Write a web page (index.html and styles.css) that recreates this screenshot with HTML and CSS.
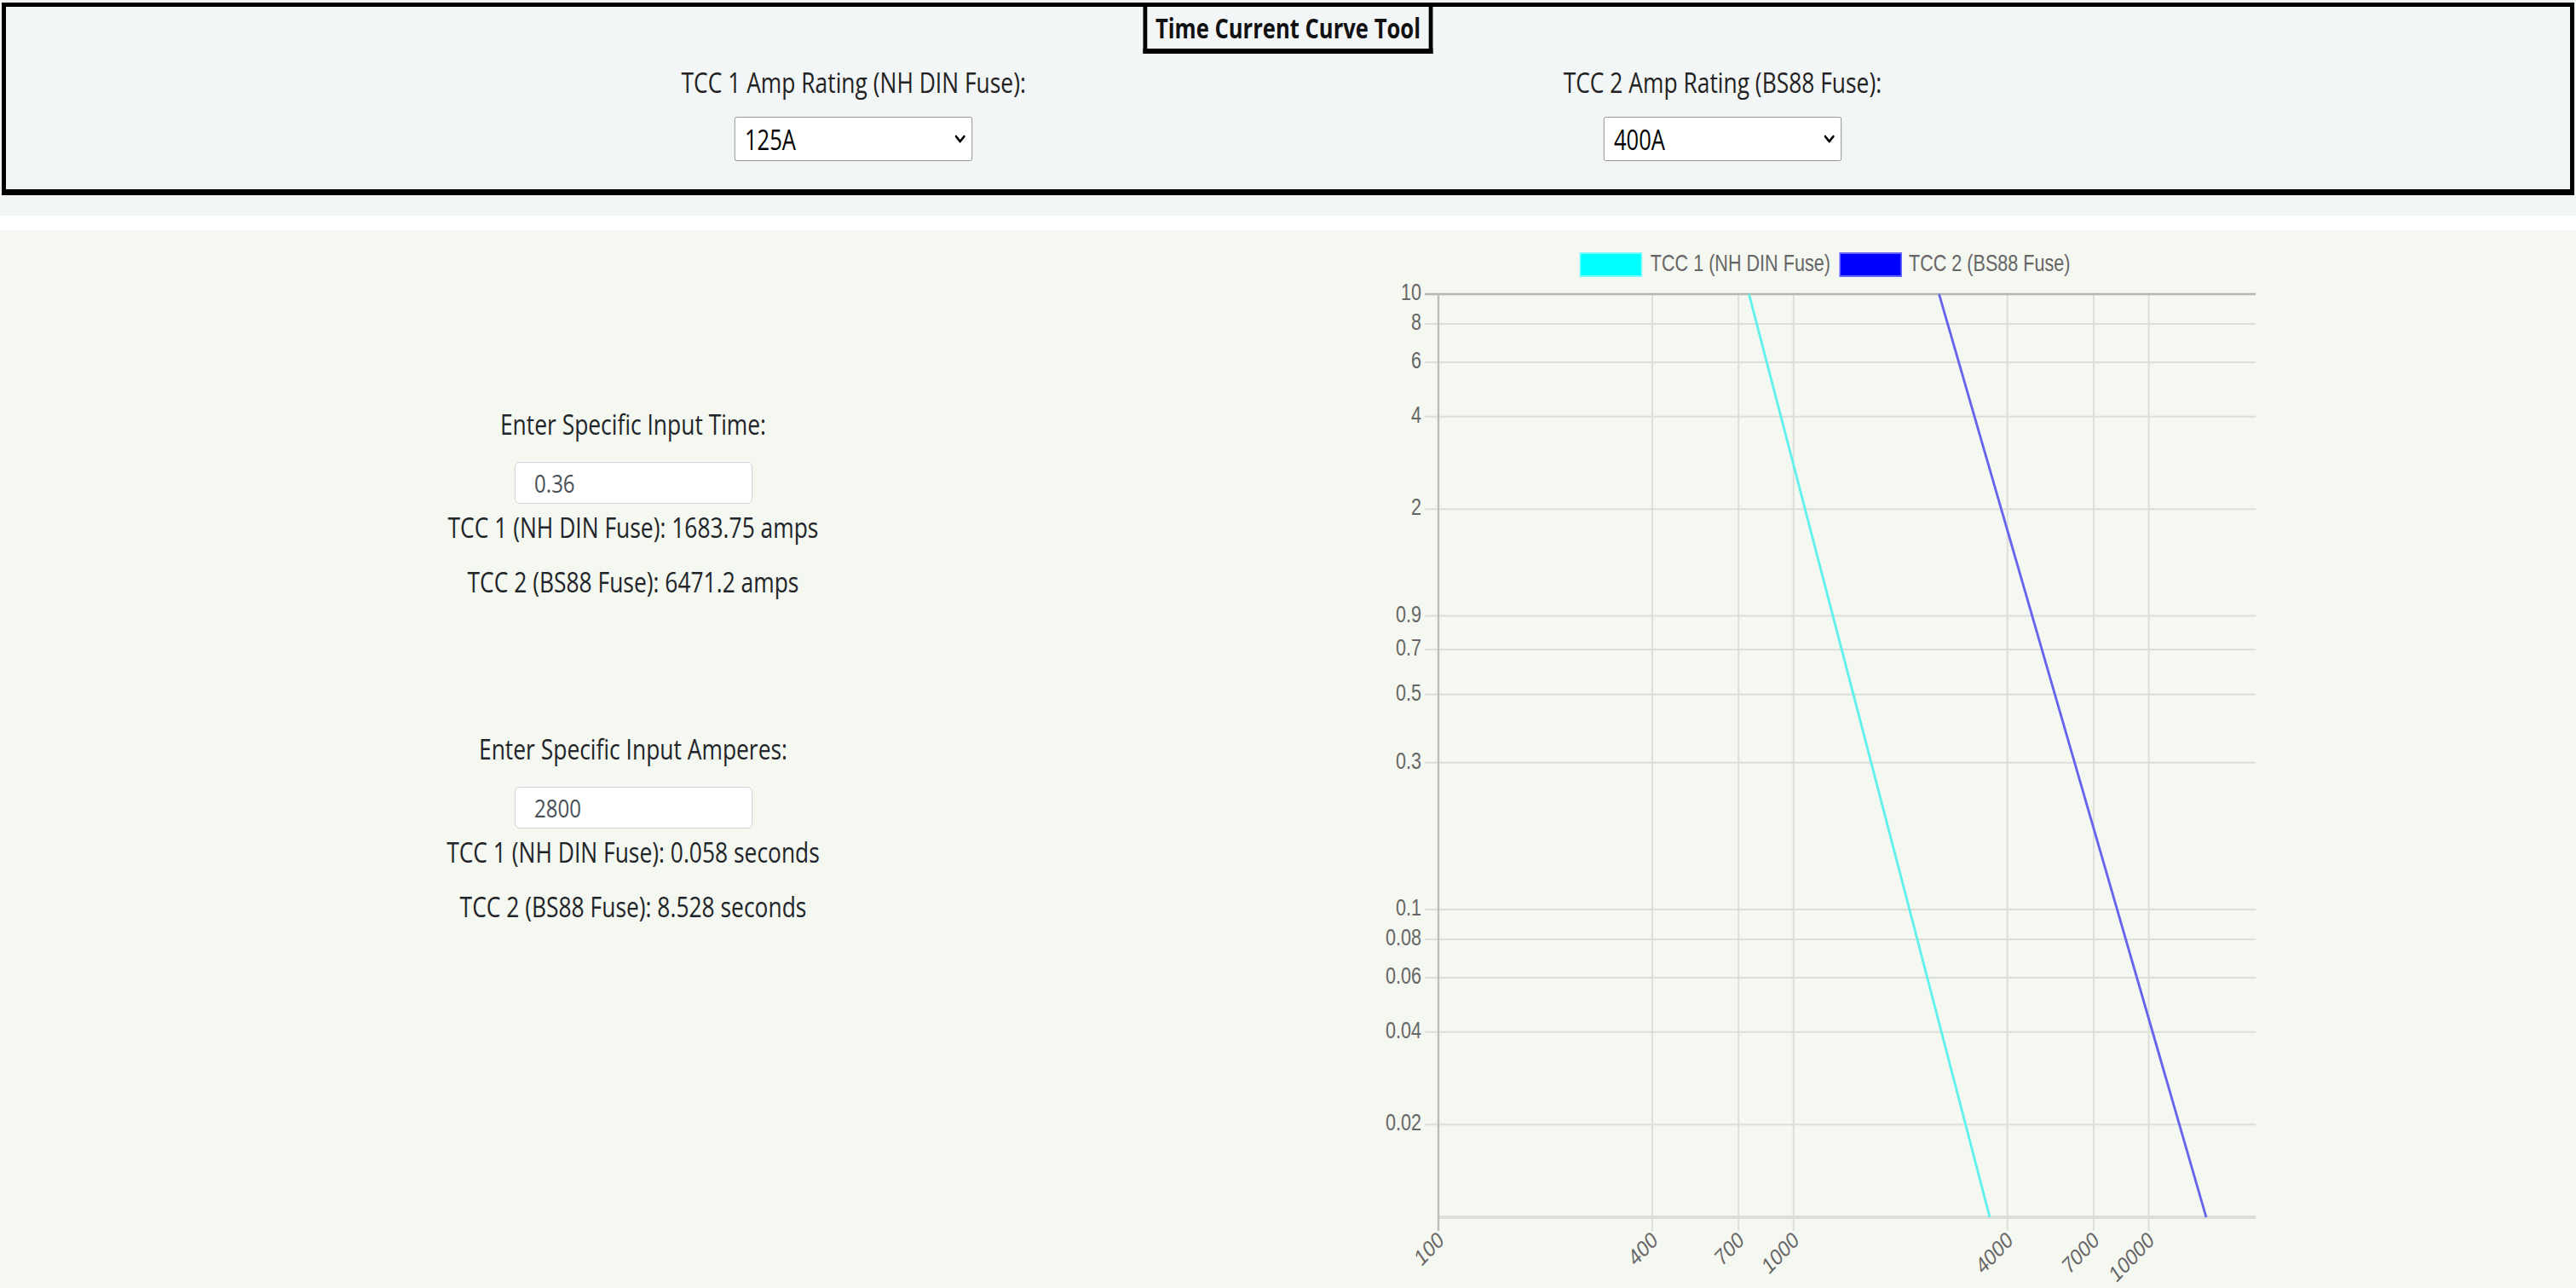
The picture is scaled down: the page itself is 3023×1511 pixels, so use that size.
FILE: index.html
```html
<!DOCTYPE html>
<html lang="en">
<head>
<meta charset="utf-8">
<title>Time Current Curve Tool</title>
<link rel="stylesheet" href="styles.css">
</head>
<body>
  <div class="top">
    <header class="panel">
      <h1 class="title narrow">Time Current Curve Tool</h1>
      <div class="ratings">
        <div class="rating">
          <label class="rating-label narrow" for="tcc1">TCC 1 Amp Rating (NH DIN Fuse):</label>
          <div class="select-wrap narrow">
            <select id="tcc1" class="select"><option>125A</option></select>
            <svg class="chevron" viewBox="0 0 16 12"><path d="M2 3 L8 9 L14 3" /></svg>
          </div>
        </div>
        <div class="rating">
          <label class="rating-label narrow" for="tcc2">TCC 2 Amp Rating (BS88 Fuse):</label>
          <div class="select-wrap narrow">
            <select id="tcc2" class="select"><option>400A</option></select>
            <svg class="chevron" viewBox="0 0 16 12"><path d="M2 3 L8 9 L14 3" /></svg>
          </div>
        </div>
      </div>
    </header>
  </div>
  <main class="main">
    <section class="inputs">
      <div class="group">
        <p class="field-label narrow">Enter Specific Input Time:</p>
        <input class="field narrow" type="text" value="0.36">
        <p class="result narrow">TCC 1 (NH DIN Fuse): 1683.75 amps</p>
        <p class="result narrow">TCC 2 (BS88 Fuse): 6471.2 amps</p>
      </div>
      <div class="group">
        <p class="field-label narrow">Enter Specific Input Amperes:</p>
        <input class="field narrow" type="text" value="2800">
        <p class="result narrow">TCC 1 (NH DIN Fuse): 0.058 seconds</p>
        <p class="result narrow">TCC 2 (BS88 Fuse): 8.528 seconds</p>
      </div>
    </section>
    <section class="chart-col">
      <svg class="chart" width="1330" height="1241" viewBox="0 0 1330 1241">
        <g class="legend">
          <rect class="swatch-1" x="318" y="27" width="90" height="27" />
          <text x="421" y="41">TCC 1 (NH DIN Fuse)</text>
          <rect class="swatch-2" x="699" y="27" width="90" height="27" />
          <text x="800" y="41">TCC 2 (BS88 Fuse)</text>
        </g>
        <g class="grid">
          <line x1="90" x2="1309" y1="110" y2="110" />
          <line x1="90" x2="1309" y1="155.1" y2="155.1" />
          <line x1="90" x2="1309" y1="218.7" y2="218.7" />
          <line x1="90" x2="1309" y1="327.3" y2="327.3" />
          <line x1="90" x2="1309" y1="452.5" y2="452.5" />
          <line x1="90" x2="1309" y1="491.9" y2="491.9" />
          <line x1="90" x2="1309" y1="544.7" y2="544.7" />
          <line x1="90" x2="1309" y1="624.8" y2="624.8" />
          <line x1="90" x2="1309" y1="797" y2="797" />
          <line x1="90" x2="1309" y1="832" y2="832" />
          <line x1="90" x2="1309" y1="877.1" y2="877.1" />
          <line x1="90" x2="1309" y1="940.7" y2="940.7" />
          <line x1="90" x2="1309" y1="1049.3" y2="1049.3" />
        </g>
        <g class="grid vgrid">
          <line x1="423.7" x2="423.7" y1="75" y2="1174" />
          <line x1="550.3" x2="550.3" y1="75" y2="1174" />
          <line x1="631" x2="631" y1="75" y2="1174" />
          <line x1="944.7" x2="944.7" y1="75" y2="1174" />
          <line x1="1071.3" x2="1071.3" y1="75" y2="1174" />
          <line x1="1152" x2="1152" y1="75" y2="1174" />
        </g>
        <line class="axis-bottom" x1="110" x2="1309" y1="1158" y2="1158" />
        <line class="axis-top" x1="90" x2="1309" y1="75" y2="75" />
        <line class="axis-left" x1="110" x2="110" y1="75" y2="1174" />
        <g class="yticks">
          <text x="85" y="75">10</text>
          <text x="85" y="110">8</text>
          <text x="85" y="155.1">6</text>
          <text x="85" y="218.7">4</text>
          <text x="85" y="327.3">2</text>
          <text x="85" y="452.5">0.9</text>
          <text x="85" y="491.9">0.7</text>
          <text x="85" y="544.7">0.5</text>
          <text x="85" y="624.8">0.3</text>
          <text x="85" y="797">0.1</text>
          <text x="85" y="832">0.08</text>
          <text x="85" y="877.1">0.06</text>
          <text x="85" y="940.7">0.04</text>
          <text x="85" y="1049.3">0.02</text>
        </g>
        <g class="xticks">
          <text transform="translate(115 1182) rotate(-40)">100</text>
          <text transform="translate(428.7 1182) rotate(-40)">400</text>
          <text transform="translate(555.3 1182) rotate(-40)">700</text>
          <text transform="translate(636 1182) rotate(-40)">1000</text>
          <text transform="translate(949.7 1182) rotate(-40)">4000</text>
          <text transform="translate(1076.3 1182) rotate(-40)">7000</text>
          <text transform="translate(1157 1182) rotate(-40)">10000</text>
        </g>
        <line class="curve-1" x1="565.6" y1="75" x2="918.8" y2="1158" />
        <line class="curve-2" x1="844.4" y1="75" x2="1236.3" y2="1158" />
      </svg>
    </section>
  </main>
</body>
</html>
```

FILE: styles.css
```css
html, body {
  margin: 0;
  padding: 0;
}

body {
  background: #ffffff;
  color: #212529;
  font-family: "Open Sans", "Noto Sans", sans-serif;
}

/* text and controls are drawn horizontally condensed, as in the capture */
.narrow {
  transform: scaleX(0.8);
}

.top {
  background: #f3f6f7;
  padding: 3px 2px 24px;
}

.panel {
  background: #f3f6f7;
  border: 5px solid #000;
  border-bottom-width: 7px;
  padding: 0 0 33px;
  text-align: center;
}

.title {
  display: inline-block;
  margin: 0;
  border: 6px solid #000;
  border-top: 0;
  padding: 0 12px;
  font-size: 32px;
  font-weight: 700;
  line-height: 49px;
  color: #111;
}

.ratings {
  display: flex;
  justify-content: center;
  margin-top: 12px;
}

.rating {
  width: 1020px;
  display: flex;
  flex-direction: column;
  align-items: center;
}

.rating-label {
  font-size: 33px;
  line-height: 44px;
  color: #222;
}

.select-wrap {
  position: relative;
  margin-top: 18px;
  width: 349px;
  height: 52px;
}

.select {
  appearance: none;
  -webkit-appearance: none;
  display: block;
  width: 100%;
  height: 100%;
  box-sizing: border-box;
  border: 1px solid #8a8a8a;
  border-radius: 3px;
  background: #fff;
  color: #000;
  font-family: "Open Sans", "Noto Sans", sans-serif;
  font-size: 32px;
  padding: 0 0 0 14px;
}

.chevron {
  position: absolute;
  right: 10px;
  top: 50%;
  width: 16px;
  height: 12px;
  margin-top: -6px;
  pointer-events: none;
}

.chevron path {
  fill: none;
  stroke: #000;
  stroke-width: 3;
  stroke-linecap: round;
  stroke-linejoin: round;
}

.main {
  margin-top: 17px;
  background: #f5f7f1;
  height: 1241px;
  display: grid;
  grid-template-columns: 1486px 1fr;
}

.inputs {
  padding-top: 206px;
  text-align: center;
}

.group + .group {
  margin-top: 152px;
}

.field-label,
.result {
  margin: 0;
  font-size: 33px;
  line-height: 44px;
}

.field {
  display: block;
  margin: 22px auto 0;
  width: 349px;
  height: 49px;
  box-sizing: border-box;
  border: 1px solid #c9cdd1;
  border-radius: 7px;
  padding: 0 28px;
  background: #fff;
  color: #495057;
  font-family: "Open Sans", "Noto Sans", sans-serif;
  font-size: 30px;
}

.result {
  margin-top: 6px;
}

.result + .result {
  margin-top: 20px;
}

.chart-col {
  padding-left: 114px;
}

.chart {
  display: block;
  transform: scaleX(0.8);
  transform-origin: 0 0;
}

.chart text {
  font-family: "Liberation Sans", Arial, sans-serif;
  font-size: 27px;
  fill: #666;
  dominant-baseline: middle;
}

.legend .swatch-1 {
  fill: #00ffff;
  stroke: #7ff;
  stroke-width: 2;
}

.legend .swatch-2 {
  fill: #0000ff;
  stroke: #66f;
  stroke-width: 2;
}

.grid line {
  stroke: #dcdeda;
  stroke-width: 2;
}

.vgrid line {
  stroke-width: 2.5;
}

.axis-top {
  stroke: #b4b6b2;
  stroke-width: 2.5;
}

.axis-left {
  stroke: #bdbfbb;
  stroke-width: 3;
}

.axis-bottom {
  stroke: #dcdeda;
  stroke-width: 4;
}

.yticks text {
  text-anchor: end;
}

.xticks text {
  text-anchor: end;
}

.curve-1 {
  stroke: #5ff2ec;
  stroke-width: 3.5;
}

.curve-2 {
  stroke: #6464ee;
  stroke-width: 3.5;
}
```
